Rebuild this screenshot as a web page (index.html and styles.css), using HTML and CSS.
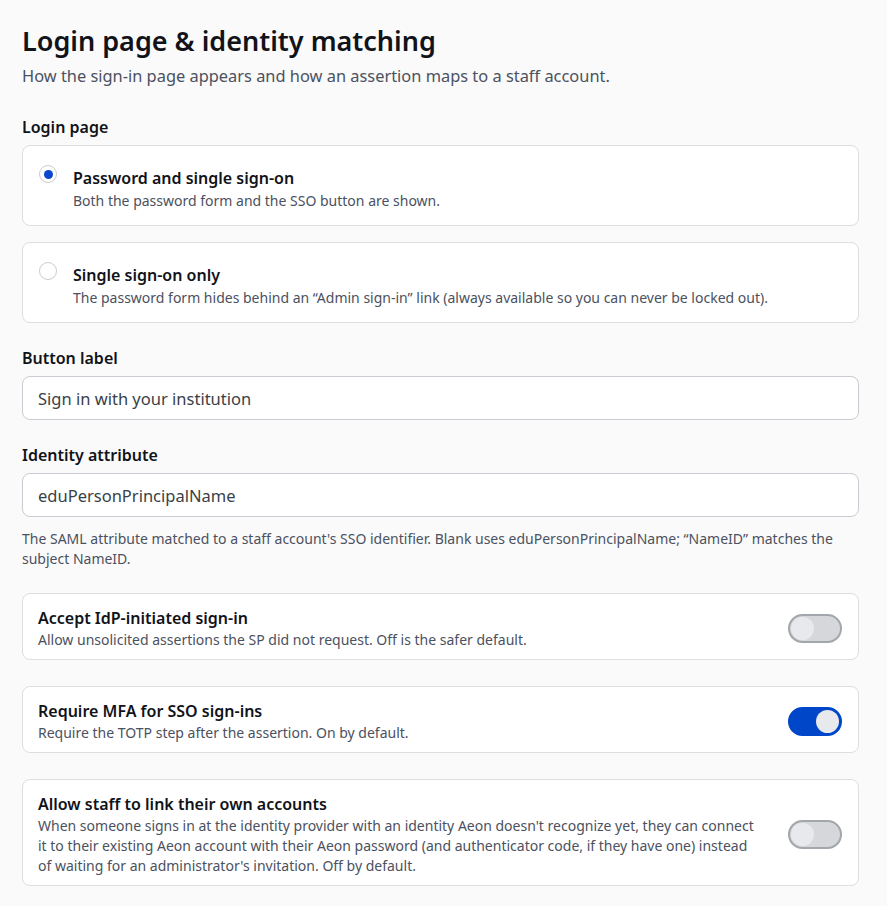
FILE: index.html
```html
<!DOCTYPE html>
<html lang="en">
<head>
<meta charset="utf-8">
<title>Login page &amp; identity matching</title>
<link rel="stylesheet" href="styles.css">
</head>
<body>
<main class="page">
  <header class="head">
    <h1 class="title">Login page &amp; identity matching</h1>
    <p class="subtitle">How the sign-in page appears and how an assertion maps to a staff account.</p>
  </header>

  <section class="field">
    <h2 class="label">Login page</h2>
    <div class="options">
      <label class="option">
        <span class="radio radio-on"></span>
        <span class="option-text">
          <span class="option-title">Password and single sign-on</span>
          <span class="option-desc">Both the password form and the SSO button are shown.</span>
        </span>
      </label>
      <label class="option">
        <span class="radio"></span>
        <span class="option-text">
          <span class="option-title">Single sign-on only</span>
          <span class="option-desc">The password form hides behind an “Admin sign-in” link (always available so you can never be locked out).</span>
        </span>
      </label>
    </div>
  </section>

  <section class="field">
    <h2 class="label">Button label</h2>
    <div class="input">Sign in with your institution</div>
  </section>

  <section class="field">
    <h2 class="label">Identity attribute</h2>
    <div class="input">eduPersonPrincipalName</div>
    <p class="help">The SAML attribute matched to a staff account's SSO identifier. Blank uses eduPersonPrincipalName; “NameID” matches the subject NameID.</p>
  </section>

  <div class="toggles">
    <div class="toggle-card">
      <div class="toggle-text">
        <div class="toggle-title">Accept IdP-initiated sign-in</div>
        <div class="toggle-desc">Allow unsolicited assertions the SP did not request. Off is the safer default.</div>
      </div>
      <span class="switch"><span class="knob"></span></span>
    </div>
    <div class="toggle-card">
      <div class="toggle-text">
        <div class="toggle-title">Require MFA for SSO sign-ins</div>
        <div class="toggle-desc">Require the TOTP step after the assertion. On by default.</div>
      </div>
      <span class="switch switch-on"><span class="knob"></span></span>
    </div>
    <div class="toggle-card">
      <div class="toggle-text">
        <div class="toggle-title">Allow staff to link their own accounts</div>
        <div class="toggle-desc">When someone signs in at the identity provider with an identity Aeon doesn't recognize yet, they can connect it to their existing Aeon account with their Aeon password (and authenticator code, if they have one) instead of waiting for an administrator's invitation. Off by default.</div>
      </div>
      <span class="switch"><span class="knob"></span></span>
    </div>
  </div>
</main>
</body>
</html>
```

FILE: styles.css
```css
* { box-sizing: border-box; }

html, body {
  margin: 0;
  padding: 0;
  background: #fafafa;
}

body {
  font-family: "Noto Sans", "Open Sans", sans-serif;
  color: #111827;
}

.page {
  width: 837px;
  margin: 0 0 0 22px;
  padding: 22px 0 20px;
}

.head { margin-bottom: 29px; }

.title {
  margin: 0;
  font-size: 27px;
  line-height: 38px;
  font-weight: 600;
  color: #111319;
}

.subtitle {
  margin: 5px 0 0;
  font-size: 16.4px;
  line-height: 22px;
  color: #4b5160;
}

.field { margin-bottom: 24px; }

.label {
  margin: 0 0 7px;
  font-size: 16px;
  line-height: 22px;
  font-weight: 600;
  color: #111319;
}

.options {
  display: flex;
  flex-direction: column;
  gap: 16px;
}

.option {
  display: flex;
  align-items: flex-start;
  gap: 16px;
  height: 81px;
  padding: 18px 16px 0 16px;
  background: #fff;
  border: 1px solid #dcdee2;
  border-radius: 8px;
}

.radio {
  flex: none;
  width: 18px;
  height: 18px;
  margin-top: 1px;
  border: 1px solid #c9ccd2;
  border-radius: 50%;
  background: #fff;
  display: flex;
  align-items: center;
  justify-content: center;
}

.radio-on::after {
  content: "";
  width: 9px;
  height: 9px;
  border-radius: 50%;
  background: #0a46cf;
}

.option-text {
  display: flex;
  flex-direction: column;
  padding-top: 3px;
}

.option-title {
  font-size: 16px;
  line-height: 22px;
  font-weight: 600;
  color: #111319;
}

.option-desc {
  margin-top: 2px;
  font-size: 14px;
  line-height: 20px;
  color: #4b5160;
}

.input {
  height: 44px;
  padding: 0 15px;
  display: flex;
  align-items: center;
  background: #fff;
  border: 1px solid #c9ccd2;
  border-radius: 8px;
  font-size: 16.5px;
  color: #3a3f47;
}

.help {
  margin: 12px 0 0;
  font-size: 14px;
  line-height: 20px;
  color: #4b5160;
}

.toggles {
  display: flex;
  flex-direction: column;
  gap: 26px;
  margin-top: 24px;
}

.toggle-card {
  display: flex;
  align-items: center;
  gap: 24px;
  padding: 13px 16px 9px 15px;
  background: #fff;
  border: 1px solid #dcdee2;
  border-radius: 8px;
}

.toggle-text { flex: 1; }

.toggle-title {
  font-size: 16px;
  line-height: 22px;
  font-weight: 600;
  color: #111319;
}

.toggle-desc {
  margin-top: 1px;
  font-size: 14px;
  line-height: 20px;
  color: #4b5160;
}

.switch {
  flex: none;
  width: 54px;
  height: 29px;
  border-radius: 15px;
  background: #d6d7da;
  border: 2px solid #a3a6ab;
  display: flex;
  align-items: center;
  padding: 0 1px;
}

.knob {
  width: 23px;
  height: 23px;
  border-radius: 50%;
  background: #e8e9ec;
}

.switch-on {
  background: #0046c8;
  border-color: #0046c8;
  justify-content: flex-end;
}
```
